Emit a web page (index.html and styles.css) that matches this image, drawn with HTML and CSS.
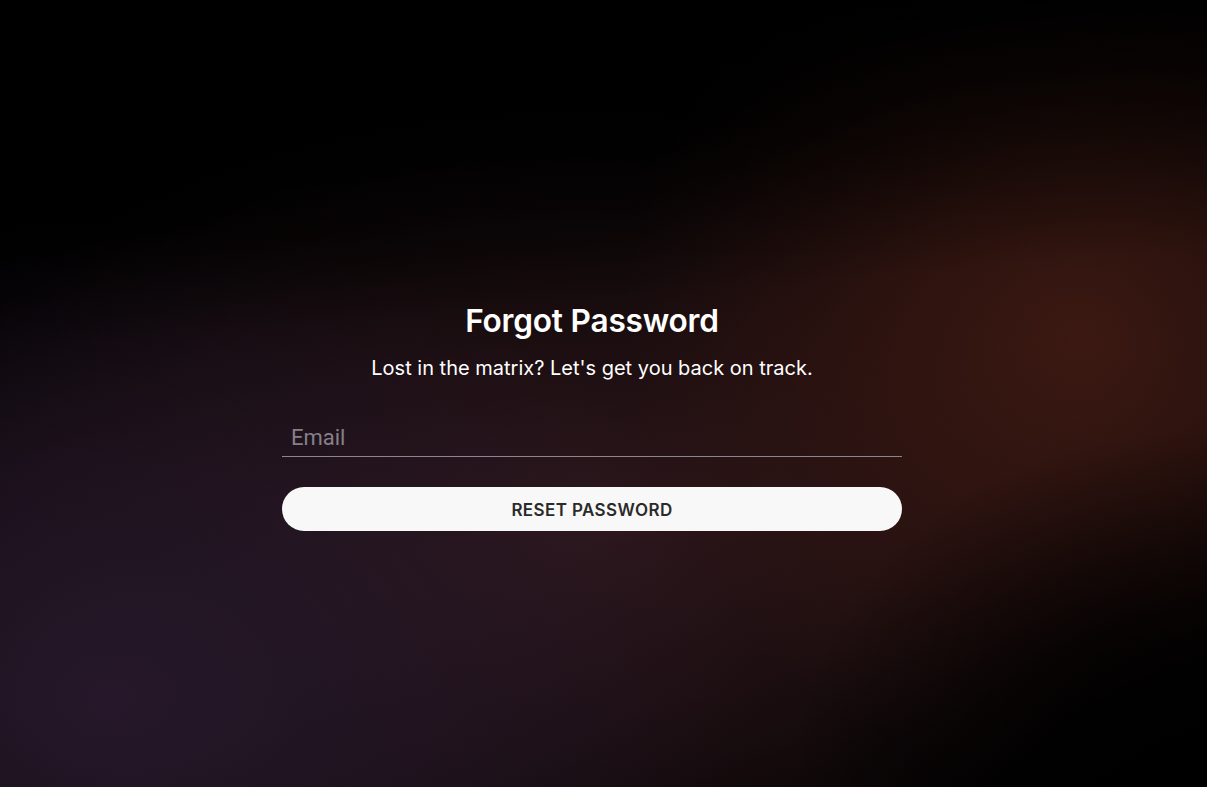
FILE: index.html
```html
<!DOCTYPE html>
<html lang="en">
<head>
<meta charset="utf-8">
<title>Forgot Password</title>
<link rel="stylesheet" href="styles.css">
</head>
<body>
<main class="page">
  <form class="card">
    <h1 class="title">Forgot Password</h1>
    <p class="subtitle">Lost in the matrix? Let's get you back on track.</p>
    <input class="field" type="email" placeholder="Email">
    <button class="btn" type="button">RESET PASSWORD</button>
  </form>
</main>
</body>
</html>
```

FILE: styles.css
```css
* { box-sizing: border-box; }
html, body { margin: 0; height: 100%; }
body {
  font-family: Inter, "Noto Sans", sans-serif;
  color: #fff;
  background-color: #000;
  background-image:
    radial-gradient(ellipse 420px 360px at 1207px 787px, rgba(0,0,0,1) 0%, rgba(0,0,0,0.85) 40%, rgba(0,0,0,0) 100%),
    linear-gradient(175deg, #000 0%, #000 8%, rgba(0,0,0,0) 40%),
    radial-gradient(ellipse 460px 440px at 1080px 340px, rgba(60,25,18,1) 0%, rgba(58,24,18,0.7) 40%, rgba(50,22,18,0) 100%),
    radial-gradient(ellipse 650px 480px at 110px 700px, rgba(38,24,42,1) 0%, rgba(38,24,42,0.6) 50%, rgba(38,24,42,0) 100%),
    radial-gradient(ellipse 700px 420px at 580px 530px, rgba(46,23,27,1) 0%, rgba(46,23,27,0.5) 55%, rgba(46,23,27,0) 100%),
    linear-gradient(160deg, #000 0%, #000 22%, rgba(0,0,0,0) 50%);
  overflow: hidden;
}
.page {
  height: 100%;
  display: flex;
  align-items: flex-start;
  justify-content: center;
  padding-right: 23px;
  padding-top: 302px;
}
.card {
  width: 620px;
  display: flex;
  flex-direction: column;
  align-items: center;
}
.title {
  margin: 0;
  font-size: 31.6px;
  font-weight: 600;
  line-height: 38px;
  letter-spacing: -0.2px;
}
.subtitle {
  margin: 14px 0 0;
  font-size: 20px;
  line-height: 28px;
  font-weight: 400;
}
.field {
  margin-top: 37px;
  width: 100%;
  height: 38px;
  background: transparent;
  border: none;
  border-bottom: 1px solid #8c8590;
  color: #fff;
  font-family: Roboto, Inter, sans-serif;
  font-size: 22px;
  padding: 0 9px 0;
  outline: none;
}
.field::placeholder { color: #86808a; }
.btn {
  margin-top: 30px;
  width: 100%;
  height: 44px;
  border: none;
  border-radius: 22px;
  background: #f8f8f8;
  color: #2a2a2a;
  font-family: Inter, sans-serif;
  font-size: 17px;
  font-weight: 600;
  letter-spacing: 0.4px;
  padding: 2px 0 0;
  cursor: pointer;
}
```
